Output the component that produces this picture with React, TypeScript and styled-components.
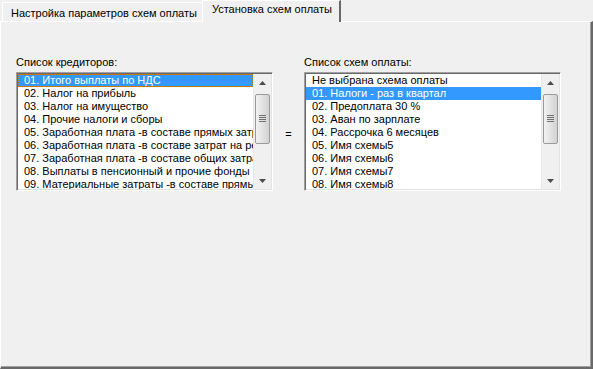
import React from "react";
import styled, { createGlobalStyle } from "styled-components";

const GlobalStyle = createGlobalStyle`
  html, body {
    margin: 0;
    padding: 0;
    background: #f0f0f0;
  }
  body {
    font-family: Tahoma, "Liberation Sans", Arial, sans-serif;
    font-size: 11px;
    color: #000;
  }
`;

const creditors = [
  "01. Итого выплаты по НДС",
  "02. Налог на прибыль",
  "03. Налог на имущество",
  "04. Прочие налоги и сборы",
  "05. Заработная плата -в составе прямых затрат",
  "06. Заработная плата -в составе затрат на реализацию",
  "07. Заработная плата -в составе общих затрат",
  "08. Выплаты в пенсионный и прочие фонды",
  "09. Материальные затраты -в составе прямых затрат",
];

const schemes = [
  "Не выбрана схема оплаты",
  "01. Налоги - раз в квартал",
  "02. Предоплата 30 %",
  "03. Аван по зарплате",
  "04. Рассрочка 6 месяцев",
  "05. Имя схемы5",
  "06. Имя схемы6",
  "07. Имя схемы7",
  "08. Имя схемы8",
];

const Window = styled.div`
  width: 593px;
  height: 369px;
  display: flex;
  flex-direction: column;
  background: #f0f0f0;
  overflow: hidden;
`;

const TabStrip = styled.div`
  height: 21px;
  display: flex;
  align-items: flex-end;
  padding-left: 2px;
  position: relative;
  z-index: 1;
`;

const Tab = styled.div<{ $active?: boolean }>`
  box-sizing: border-box;
  height: ${({ $active }) => ($active ? "22px" : "19px")};
  margin-bottom: ${({ $active }) => ($active ? "-1px" : "0")};
  padding: ${({ $active }) => ($active ? "2px 7px 0 9px" : "4px 5px 0 8px")};
  margin-left: ${({ $active }) => ($active ? "-1px" : "0")};
  border-top: 1px solid #ffffff;
  border-left: 1px solid #ffffff;
  border-right: ${({ $active }) =>
    $active ? "2px solid #696969" : "1px solid #a0a0a0"};
  background: #f0f0f0;
  white-space: nowrap;
  line-height: 13px;
`;

const Panel = styled.div`
  flex: 1;
  box-sizing: border-box;
  border-top: 1px solid #ffffff;
  border-left: 1px solid #ffffff;
  border-right: 2px solid #696969;
  border-bottom: 2px solid #696969;
  box-shadow: inset -1px -1px 0 #a0a0a0;
  padding: 34px 0 0 15px;
`;

const Columns = styled.div`
  display: flex;
  align-items: flex-start;
`;

const Group = styled.div`
  display: flex;
  flex-direction: column;
`;

const Label = styled.div`
  line-height: 13px;
  margin-bottom: 3px;
`;

const Equals = styled.div`
  width: 31px;
  text-align: center;
  padding-top: 72px;
  line-height: 13px;
`;

const ListBox = styled.div<{ $width: number }>`
  box-sizing: border-box;
  width: ${({ $width }) => $width}px;
  height: 119px;
  display: flex;
  background: #ffffff;
  border: 1px solid;
  border-color: #a0a0a0 #ffffff #ffffff #a0a0a0;
  box-shadow: inset 1px 1px 0 #696969, inset -1px -1px 0 #e3e3e3;
  padding: 1px;
`;

const Items = styled.div`
  flex: 1;
  min-width: 0;
  overflow: hidden;
`;

const Item = styled.div<{ $selected?: boolean; $focused?: boolean }>`
  box-sizing: border-box;
  height: 13px;
  line-height: 13px;
  padding-left: 6px;
  white-space: nowrap;
  overflow: hidden;
  background: ${({ $selected }) => ($selected ? "#3399ff" : "transparent")};
  color: ${({ $selected }) => ($selected ? "#ffffff" : "#000000")};
  outline: ${({ $focused }) => ($focused ? "1px dotted #cc7a00" : "none")};
  outline-offset: -1px;
`;

const ScrollBar = styled.div`
  width: 17px;
  display: flex;
  flex-direction: column;
  align-items: center;
  background: #f0f0f0;
  border-left: 1px solid #e8e8e8;
`;

const Arrow = styled.div`
  height: 17px;
  width: 17px;
  display: flex;
  align-items: center;
  justify-content: center;
`;

const Track = styled.div`
  flex: 1;
  width: 100%;
  display: flex;
  flex-direction: column;
  align-items: center;
`;

const Thumb = styled.div`
  box-sizing: border-box;
  margin-top: 3px;
  width: 15px;
  height: 50px;
  border: 1px solid #9b9b9b;
  border-radius: 2px;
  background: linear-gradient(to right, #f2f2f2, #e2e2e2 50%, #d2d2d2);
  display: flex;
  align-items: center;
  justify-content: center;
`;

const Grip = () => (
  <svg width="7" height="8" viewBox="0 0 7 8">
    <path d="M0 0.5h7M0 2.5h7M0 4.5h7M0 6.5h7" stroke="#6f6f6f" strokeWidth="1" />
  </svg>
);

const ArrowIcon = ({ down }: { down?: boolean }) => (
  <svg width="7" height="4" viewBox="0 0 7 4">
    <path d={down ? "M0 0h7L3.5 4z" : "M0 4h7L3.5 0z"} fill="#4d4d4d" />
  </svg>
);

const List = ({
  items,
  selected,
  width,
}: {
  items: string[];
  selected: number;
  width: number;
}) => (
  <ListBox $width={width}>
    <Items>
      {items.map((text, i) => (
        <Item key={text} $selected={i === selected} $focused={i === selected && selected === 0}>
          {text}
        </Item>
      ))}
    </Items>
    <ScrollBar>
      <Arrow>
        <ArrowIcon />
      </Arrow>
      <Track>
        <Thumb>
          <Grip />
        </Thumb>
      </Track>
      <Arrow>
        <ArrowIcon down />
      </Arrow>
    </ScrollBar>
  </ListBox>
);

export default function App() {
  return (
    <Window>
      <GlobalStyle />
      <TabStrip>
        <Tab>Настройка параметров схем оплаты</Tab>
        <Tab $active>Установка схем оплаты</Tab>
      </TabStrip>
      <Panel>
        <Columns>
          <Group>
            <Label>Список кредиторов:</Label>
            <List items={creditors} selected={0} width={257} />
          </Group>
          <Equals>=</Equals>
          <Group>
            <Label>Список схем оплаты:</Label>
            <List items={schemes} selected={1} width={257} />
          </Group>
        </Columns>
      </Panel>
    </Window>
  );
}
